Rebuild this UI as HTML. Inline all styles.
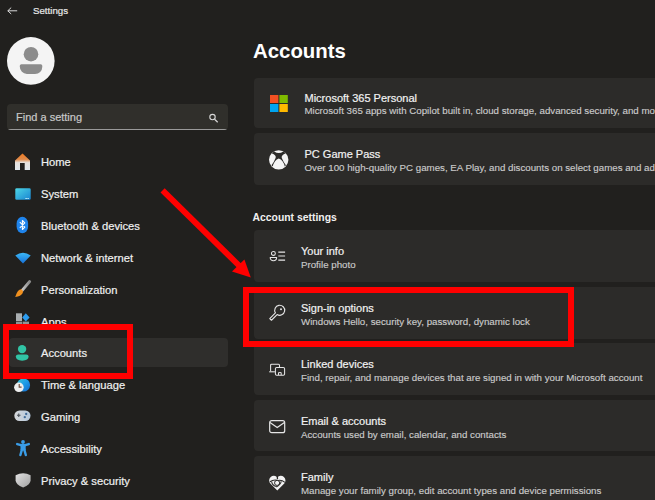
<!DOCTYPE html>
<html><head><meta charset="utf-8">
<style>
*{margin:0;padding:0;box-sizing:border-box}
html,body{width:655px;height:500px;overflow:hidden;background:#21201e;font-family:"Liberation Sans",sans-serif;color:#fff;position:relative}
.abs{position:absolute}
.t{position:absolute;white-space:nowrap;line-height:1;-webkit-text-stroke:0.2px currentColor}
.nav{font-size:11.2px;color:#f0f0f0;left:41px}
.card{position:absolute;left:254px;width:420px;background:#2c2b29;border-radius:4px}
.ct{-webkit-text-stroke:0.2px currentColor;position:absolute;font-size:11px;color:#f2f2f2;white-space:nowrap;line-height:1}
.cs{-webkit-text-stroke:0.15px currentColor;position:absolute;font-size:9.72px;color:#cacaca;white-space:nowrap;line-height:1}
svg{position:absolute;overflow:visible}
</style></head><body>
<!-- title bar -->
<svg style="left:7px;top:7px" width="11" height="8" viewBox="0 0 11 8"><path d="M0.8 3.8H10.2M0.8 3.8L4.2 0.6M0.8 3.8L4.2 7" stroke="#d8d8d8" stroke-width="1" fill="none"/></svg>
<div class="t" style="left:33px;top:5.5px;font-size:9.7px;color:#e8e8e8">Settings</div>

<!-- avatar -->
<svg style="left:7px;top:37px" width="48" height="48" viewBox="0 0 48 48">
<circle cx="23.8" cy="23.9" r="23.8" fill="#f4f4f4"/>
<circle cx="24" cy="17.2" r="7.3" fill="#8c8c8c"/>
<path d="M14.4 27.2H33.7A1.6 1.6 0 0 1 35.3 28.8V29.8A7.2 7.2 0 0 1 28.1 37H19.9A7.2 7.2 0 0 1 12.8 29.8V28.8A1.6 1.6 0 0 1 14.4 27.2z" fill="#8c8c8c"/>
</svg>

<!-- search -->
<div class="abs" style="left:7px;top:104px;width:221px;height:26px;background:#302f2b;border-radius:4px;overflow:hidden"><div class="abs" style="left:0;bottom:0;width:221px;height:1px;background:#9a9a9a"></div></div>
<div class="t" style="left:16px;top:111.5px;font-size:11px;color:#c8c8c8">Find a setting</div>
<svg style="left:208px;top:113px" width="11" height="11" viewBox="0 0 11 11"><circle cx="4.5" cy="4.1" r="2.7" stroke="#d8d8d8" stroke-width="1.1" fill="none"/><path d="M6.6 6.3L9.7 9.3" stroke="#d8d8d8" stroke-width="1.2"/></svg>

<!-- selected -->
<div class="abs" style="left:9px;top:338px;width:219px;height:29px;background:#2f2e2c;border-radius:4px"></div>

<!-- nav icons -->
<!-- home -->
<svg style="left:14px;top:153px" width="17" height="17" viewBox="0 0 17 17">
<defs><linearGradient id="roof" x1="0" y1="0" x2="0" y2="1"><stop offset="0" stop-color="#ee7a22"/><stop offset="0.35" stop-color="#e08a4a"/><stop offset="0.55" stop-color="#e6e2de"/><stop offset="1" stop-color="#dfe6ec"/></linearGradient></defs>
<path d="M1 7.6L8.5 0.6L16 7.6V17H10.7V10.1H6V17H1z" fill="url(#roof)" stroke-linejoin="round"/>
</svg>
<!-- system -->
<svg style="left:14.5px;top:187.5px" width="16" height="12" viewBox="0 0 16 12">
<defs><linearGradient id="sys" x1="0" y1="0" x2="1" y2="1"><stop offset="0" stop-color="#4dd6e6"/><stop offset="1" stop-color="#1884d2"/></linearGradient></defs>
<rect x="0.3" y="0.3" width="15.4" height="11.4" rx="1.3" fill="url(#sys)"/>
<rect x="10.5" y="10" width="1.2" height="1" fill="#dff"/><rect x="12.5" y="10" width="1.2" height="1" fill="#dff"/>
</svg>
<!-- bluetooth -->
<svg style="left:16px;top:216px" width="13" height="18" viewBox="0 0 13 18">
<rect x="0.6" y="0.8" width="11.5" height="16.4" rx="5.75" ry="6.6" fill="#1f84ec"/>
<path d="M3.8 6.2L8.8 11.2L6.4 13.5V4.5L8.8 6.8L3.8 11.8" stroke="#fff" stroke-width="1.1" fill="none" stroke-linejoin="round"/>
</svg>
<!-- wifi -->
<svg style="left:14.5px;top:251.5px" width="16" height="12" viewBox="0 0 16 12">
<defs><linearGradient id="wf" x1="0" y1="0" x2="0" y2="1"><stop offset="0" stop-color="#3cb8f6"/><stop offset="1" stop-color="#1670d8"/></linearGradient></defs>
<path d="M0.3 3.6Q8 -2.2 15.7 3.6L8 11.6z" fill="url(#wf)"/>
</svg>
<!-- brush -->
<svg style="left:14px;top:280px" width="17" height="18" viewBox="0 0 17 18">
<defs><linearGradient id="hdl" x1="0" y1="0" x2="1" y2="0"><stop offset="0" stop-color="#c8c8c8"/><stop offset="1" stop-color="#8a8a8a"/></linearGradient></defs>
<path d="M15.6 1.6L8.2 10.4" stroke="url(#hdl)" stroke-width="3" stroke-linecap="round"/>
<path d="M7.2 9.2Q9.8 10.6 8.6 13.2Q7 16.2 1.2 16.9Q2.4 13 4 11Q5.4 9.2 7.2 9.2z" fill="#f0901e"/>
</svg>
<!-- apps -->
<svg style="left:16px;top:312px" width="15" height="12" viewBox="0 0 15 12">
<rect x="0" y="1.3" width="6" height="7.7" fill="#a9aeb0"/>
<rect x="0" y="9.6" width="6" height="3" fill="#8f9496"/>
<rect x="6.6" y="9.6" width="6.4" height="3" fill="#8f9496"/>
<path d="M9.8 1.3L13.6 5.4L9.8 9.4L6.2 5.4z" fill="#2c9cee"/>
</svg>
<!-- accounts -->
<svg style="left:15px;top:343.5px" width="15" height="17" viewBox="0 0 15 17">
<circle cx="7.1" cy="5.1" r="4.2" fill="#31c4a5"/>
<path d="M0.85 12.6Q0.85 10.5 3.2 10.5H11.3Q13.6 10.5 13.6 12.6Q13.6 16.7 7.2 16.7Q0.85 16.7 0.85 12.6z" fill="#31c4a5"/>
</svg>
<!-- time -->
<svg style="left:14px;top:377px" width="17" height="17" viewBox="0 0 17 17">
<defs><linearGradient id="glb" x1="0" y1="0" x2="1" y2="1"><stop offset="0" stop-color="#3cc4d0"/><stop offset="0.5" stop-color="#1c9ae8"/><stop offset="1" stop-color="#1466c8"/></linearGradient></defs>
<circle cx="9.5" cy="8" r="6.6" fill="url(#glb)"/>
<circle cx="4.9" cy="10.3" r="4.8" fill="#eeeeee"/>
<path d="M5.2 7V10.1H7.6" stroke="#6a4a3a" stroke-width="1.1" fill="none"/>
</svg>
<!-- gaming -->
<svg style="left:14px;top:410px" width="17" height="12" viewBox="0 0 17 12">
<defs><linearGradient id="gp" x1="0" y1="0" x2="1" y2="0"><stop offset="0" stop-color="#d6d8da"/><stop offset="1" stop-color="#b4c8dc"/></linearGradient></defs>
<rect x="0.3" y="0.6" width="16.2" height="10.4" rx="5.2" fill="url(#gp)"/>
<path d="M3 5.3H6.5M4.75 3.5V7.1" stroke="#4a5058" stroke-width="1.1"/>
<circle cx="12.2" cy="4" r="1.15" fill="#3f6a98"/><circle cx="10.8" cy="7.2" r="1.15" fill="#3f6a98"/>
</svg>
<!-- accessibility -->
<svg style="left:15.5px;top:439.5px" width="14" height="17" viewBox="0 0 14 17">
<circle cx="7" cy="2" r="1.9" fill="#3a9de8"/>
<path d="M1.2 4.1L5 5.2H9.2L12.8 4.1" stroke="#3a9de8" stroke-width="2.4" fill="none" stroke-linecap="round" stroke-linejoin="round"/>
<path d="M5.9 9.6L4.4 15M8.3 9.6L9.8 15" stroke="#3a9de8" stroke-width="2.4" fill="none" stroke-linecap="round"/>
<rect x="4.5" y="4.4" width="5.2" height="6.2" rx="1.2" fill="#3a9de8"/>
</svg>
<!-- privacy -->
<svg style="left:14.5px;top:471.5px" width="17" height="16" viewBox="0 0 17 16">
<defs><linearGradient id="sh" x1="0" y1="0" x2="1" y2="1"><stop offset="0" stop-color="#e2e2e2"/><stop offset="1" stop-color="#a0a0a0"/></linearGradient></defs>
<path d="M0.6 3.2Q8.1 -0.6 15.6 3.2V8.2Q15.6 12.6 8.1 15.6Q0.6 12.6 0.6 8.2z" fill="url(#sh)"/>
</svg>

<div class="t nav" style="top:157.4px">Home</div>
<div class="t nav" style="top:189.2px">System</div>
<div class="t nav" style="top:221.0px">Bluetooth &amp; devices</div>
<div class="t nav" style="top:252.9px">Network &amp; internet</div>
<div class="t nav" style="top:284.7px">Personalization</div>
<div class="t nav" style="top:316.5px">Apps</div>
<div class="t nav" style="top:348.3px">Accounts</div>
<div class="t nav" style="top:380.1px">Time &amp; language</div>
<div class="t nav" style="top:411.9px">Gaming</div>
<div class="t nav" style="top:443.7px">Accessibility</div>
<div class="t nav" style="top:475.5px">Privacy &amp; security</div>

<!-- right -->
<div class="t" style="left:253px;top:40.6px;font-size:20.4px;font-weight:bold;color:#fff;-webkit-text-stroke:0">Accounts</div>

<div class="card" style="top:77.6px;height:50.8px"></div>
<svg style="left:270px;top:95px" width="18" height="17" viewBox="0 0 18 17">
<rect x="0" y="0" width="8.4" height="8" fill="#f25022"/><rect x="9.4" y="0" width="8.4" height="8" fill="#7fba00"/>
<rect x="0" y="9" width="8.4" height="8" fill="#00a4ef"/><rect x="9.4" y="9" width="8.4" height="8" fill="#ffb900"/>
</svg>
<div class="ct" style="left:304.5px;top:92.7px">Microsoft 365 Personal</div>
<div class="cs" style="left:304.5px;top:106.4px">Microsoft 365 apps with Copilot built in, cloud storage, advanced security, and more</div>

<div class="card" style="top:133.2px;height:51.5px"></div>
<svg style="left:268.8px;top:150.2px" width="20" height="20" viewBox="0 0 20 20">
<circle cx="9.7" cy="9.85" r="9.7" fill="#f4f4f4"/>
<path d="M2.6 3.3L5.2 1.6Q9.8 4.6 14.3 1.6L16.9 3.3Q11.8 5.2 12.8 8.1Q14.2 11.6 16.9 15.3L15.8 16.5Q14.2 10 9.8 8.5Q5.4 10 3.7 16.5L2.5 15.3Q5.3 11.6 6.6 8.1Q7.7 5.2 2.6 3.3Z" fill="#2c2b29"/>
</svg>
<div class="ct" style="left:304.5px;top:149.1px">PC Game Pass</div>
<div class="cs" style="left:304.5px;top:163px">Over 100 high-quality PC games, EA Play, and discounts on select games and add-ons</div>

<div class="t" style="left:252.5px;top:212.5px;font-size:10.4px;font-weight:bold;color:#f0f0f0;-webkit-text-stroke:0">Account settings</div>

<div class="card" style="top:230.4px;height:51.8px"></div>
<svg style="left:268px;top:249px" width="18" height="14" viewBox="0 0 18 14">
<circle cx="5.4" cy="4.4" r="1.95" stroke="#e6e6e6" stroke-width="1.05" fill="none"/>
<path d="M2.2 8.5H8.6A3.2 3.2 0 0 1 2.2 8.5z" stroke="#e6e6e6" stroke-width="1.1" fill="none" stroke-linejoin="round"/>
<path d="M10.3 3.1H17.1M10.3 7H17.1M10.3 11.1H17.1" stroke="#e6e6e6" stroke-width="1.2"/>
</svg>
<div class="ct" style="left:301px;top:246.1px">Your info</div>
<div class="cs" style="left:301px;top:260.3px">Profile photo</div>

<div class="card" style="top:286.7px;height:52.3px"></div>
<svg style="left:268px;top:303px" width="19" height="19" viewBox="0 0 19 19">
<path d="M9.12 11.58L3.45 17.25L1.75 15.55L7.42 9.88A5 5 0 1 1 9.12 11.58Z" stroke="#e6e6e6" stroke-width="1.1" fill="none" stroke-linejoin="round"/>
<circle cx="13" cy="6.3" r="1" fill="#e6e6e6"/>
</svg>
<div class="ct" style="left:301px;top:303.1px">Sign-in options</div>
<div class="cs" style="left:301px;top:317.3px">Windows Hello, security key, password, dynamic lock</div>

<div class="card" style="top:343.2px;height:51.8px"></div>
<svg style="left:269px;top:363px" width="17" height="14" viewBox="0 0 17 14">
<path d="M1.6 8.2V2.2A1 1 0 0 1 2.6 1.2H9.5A1 1 0 0 1 10.5 2.2V4.5" stroke="#e6e6e6" stroke-width="1.05" fill="none"/>
<path d="M0.2 8.8H5.9" stroke="#e6e6e6" stroke-width="1.1"/>
<rect x="6.4" y="4.5" width="9.2" height="7.7" rx="1.3" stroke="#e6e6e6" stroke-width="1.05" fill="none"/>
<path d="M9.5 12V9.6H12.2V12" stroke="#e6e6e6" stroke-width="1" fill="none"/>
</svg>
<div class="ct" style="left:301px;top:359.1px">Linked devices</div>
<div class="cs" style="left:301px;top:373.3px">Find, repair, and manage devices that are signed in with your Microsoft account</div>

<div class="card" style="top:399.8px;height:51.2px"></div>
<svg style="left:269px;top:420px" width="17" height="14" viewBox="0 0 17 14">
<rect x="0.7" y="0.7" width="15" height="12" rx="2" stroke="#e6e6e6" stroke-width="1.2" fill="none"/>
<path d="M1 2.6L8.2 7.6L15.4 2.6" stroke="#e6e6e6" stroke-width="1.2" fill="none"/>
</svg>
<div class="ct" style="left:301px;top:415.6px">Email &amp; accounts</div>
<div class="cs" style="left:301px;top:429.8px">Accounts used by email, calendar, and contacts</div>

<div class="card" style="top:456px;height:60px"></div>
<svg style="left:268.8px;top:475.5px" width="17" height="15" viewBox="0 0 17 15">
<path d="M8.3 14.5L1.3 7.6A4.2 4.2 0 0 1 8.3 1.4A4.2 4.2 0 0 1 15.3 7.6z" fill="#f2f2f2"/>
<path d="M8.3 0.6L8.5 3.2" stroke="#2c2b29" stroke-width="1.3"/>
<path d="M0.9 5.8Q4.5 3.3 8.1 4.2M15.9 6.3Q12.6 3.6 9.2 4.4" stroke="#2c2b29" stroke-width="1.05" fill="none"/>
<circle cx="8.1" cy="6.9" r="2.55" stroke="#2c2b29" stroke-width="1" fill="none"/>
<path d="M2.6 5.6Q3.4 9.9 7.6 10.5M12.2 5.3Q11.8 8.6 7.4 11.1" stroke="#2c2b29" stroke-width="1.05" fill="none"/>
</svg>
<div class="ct" style="left:301px;top:472.1px">Family</div>
<div class="cs" style="left:301px;top:486.3px">Manage your family group, edit account types and device permissions</div>

<!-- red annotations -->
<div class="abs" style="left:3px;top:323.5px;width:130px;height:55px;border:6.3px solid #ff0000"></div>
<div class="abs" style="left:243px;top:287px;width:331px;height:60px;border:6.3px solid #ff0000"></div>
<svg style="left:0;top:0" width="655" height="500" viewBox="0 0 655 500">
<path d="M162.6 190.4L240 266.5" stroke="#ff0000" stroke-width="5.9" stroke-linecap="butt"/>
<path d="M250.8 277.4L232 271.4L244.4 259.4z" fill="#ff0000"/>
</svg>

</body></html>
